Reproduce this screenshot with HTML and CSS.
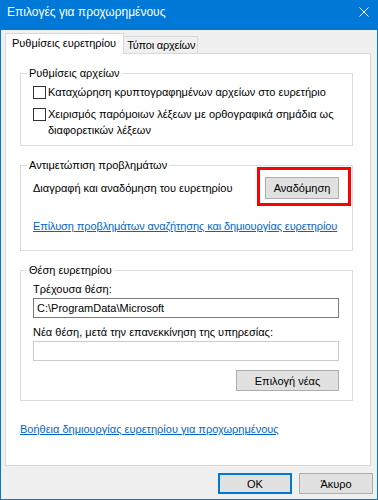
FILE: index.html
```html
<!DOCTYPE html>
<html lang="el">
<head>
  <meta charset="UTF-8" />
  <title>Επιλογές για προχωρημένους</title>
  <link rel="stylesheet" href="styles.css">
</head>
<body>
  <div class="window">
    <header class="titlebar">
      <span class="title">Επιλογές για προχωρημένους</span>
      <svg class="close-icon" width="10" height="10" viewBox="0 0 10 10">
        <path d="M0.5 0.5 L9.5 9.5 M9.5 0.5 L0.5 9.5" stroke="#fff" stroke-width="1" fill="none"/>
      </svg>
    </header>

    <nav class="tabs">
      <div class="tab active">Ρυθμίσεις ευρετηρίου</div>
      <div class="tab">Τύποι αρχείων</div>
    </nav>

    <main class="panel">
      <fieldset class="group group-files">
        <legend>Ρυθμίσεις αρχείων</legend>
        <label class="check-row">
          <span class="checkbox"></span>
          <span>Καταχώρηση κρυπτογραφημένων αρχείων στο ευρετήριο</span>
        </label>
        <label class="check-row second">
          <span class="checkbox"></span>
          <span>Χειρισμός παρόμοιων λέξεων με ορθογραφικά σημάδια ως διαφορετικών λέξεων</span>
        </label>
      </fieldset>

      <fieldset class="group group-trouble">
        <legend>Αντιμετώπιση προβλημάτων</legend>
        <div class="rebuild-row">
          <span>Διαγραφή και αναδόμηση του ευρετηρίου</span>
          <button class="btn btn-rebuild">Αναδόμηση</button>
        </div>
        <a href="#" class="link trouble-link">Επίλυση προβλημάτων αναζήτησης και δημιουργίας ευρετηρίου</a>
      </fieldset>

      <fieldset class="group group-location">
        <legend>Θέση ευρετηρίου</legend>
        <div class="field-label">Τρέχουσα θέση:</div>
        <input class="text-input" type="text" value="C:\ProgramData\Microsoft" readonly>
        <div class="field-label second">Νέα θέση, μετά την επανεκκίνηση της υπηρεσίας:</div>
        <input class="text-input disabled" type="text" disabled>
        <div class="select-row">
          <button class="btn btn-select">Επιλογή νέας</button>
        </div>
      </fieldset>

      <a href="#" class="link help-link">Βοήθεια δημιουργίας ευρετηρίου για προχωρημένους</a>
    </main>

    <footer class="dialog-buttons">
      <button class="btn btn-dialog default">OK</button>
      <button class="btn btn-dialog">Άκυρο</button>
    </footer>
  </div>
</body>
</html>
```

FILE: styles.css
```css
body {
  margin: 0;
  font-family: "Liberation Sans", "DejaVu Sans", sans-serif;
  font-size: 11px;
  line-height: 16px;
  color: #000;
}

.window {
  width: 378px;
  height: 500px;
  box-sizing: border-box;
  border: 1px solid #0078d7;
  border-top: none;
  background: #f0f0f0;
  display: flex;
  flex-direction: column;
}

.titlebar {
  height: 30px;
  box-sizing: border-box;
  background: #0078d7;
  color: #fff;
  font-size: 12px;
  display: flex;
  align-items: center;
  justify-content: space-between;
  padding: 0 8px 6px 6px;
  flex-shrink: 0;
}

.close-icon {
  display: block;
}

.tabs {
  display: flex;
  align-items: flex-end;
  margin: 3px 0 0 4px;
  flex-shrink: 0;
}

.tab {
  height: 16px;
  line-height: 17px;
  padding: 0 2px 0 3px;
  letter-spacing: -0.2px;
  border: 1px solid #d9d9d9;
  border-left: none;
  border-bottom: none;
  background: #f0f0f0;
  white-space: nowrap;
}

.tab.active {
  height: 20px;
  line-height: 19px;
  padding: 0 7px 0 6px;
  letter-spacing: 0;
  border-left: 1px solid #d9d9d9;
  background: #fff;
  margin-bottom: -1px;
  position: relative;
  z-index: 1;
}

.panel {
  flex: 1;
  min-height: 0;
  margin: 0 6px 0 4px;
  border: 1px solid #d9d9d9;
  background: #fff;
  padding: 11px 17px 0 14px;
}

.group {
  margin: 0;
  min-width: 0;
  border: 1px solid #dcdcdc;
  padding: 0 13px 0 12px;
}

.group legend {
  padding: 0 2px;
  margin-left: -6px;
  line-height: 16px;
}

.group-files {
  padding-top: 3px;
  padding-bottom: 7px;
}

.group-trouble,
.group-location {
  margin-top: 11px;
}

.check-row {
  display: flex;
  align-items: flex-start;
  gap: 2px;
}

.check-row.second {
  margin-top: 6px;
}

.checkbox {
  flex-shrink: 0;
  width: 13px;
  height: 13px;
  box-sizing: border-box;
  border: 1px solid #333;
  background: #fff;
  margin-top: 2px;
}

.btn {
  font: inherit;
  color: #000;
  background: #e1e1e1;
  border: 1px solid #adadad;
  padding: 0;
  box-sizing: border-box;
}

.rebuild-row {
  display: flex;
  justify-content: space-between;
  align-items: center;
  padding-top: 4px;
}

.btn-rebuild {
  width: 74px;
  height: 22px;
  position: relative;
}

/* red highlight frame around the button */
.btn-rebuild::after {
  content: "";
  position: absolute;
  top: -11px;
  left: -9px;
  right: -13px;
  bottom: -8px;
  border: 3px solid #f00;
}

.link {
  color: #0066cc;
  text-decoration: underline;
  display: block;
  white-space: nowrap;
}

.trouble-link {
  margin-top: 19px;
  padding-bottom: 16px;
  letter-spacing: -0.1px;
}

.group-location {
  padding-top: 3px;
  padding-bottom: 9px;
}

.field-label.second {
  margin-top: 6px;
}

.text-input {
  display: block;
  width: 100%;
  height: 20px;
  box-sizing: border-box;
  margin: 1px 0 0;
  padding: 0 3px;
  font: inherit;
  color: #000;
  border: 1px solid #7a7a7a;
  background: #fff;
  outline: none;
}

.text-input.disabled {
  border-color: #cccccc;
}

.select-row {
  display: flex;
  justify-content: flex-end;
  margin-top: 9px;
}

.btn-select {
  width: 103px;
  height: 21px;
}

.help-link {
  margin-top: 20px;
}

.dialog-buttons {
  display: flex;
  justify-content: flex-end;
  gap: 7px;
  padding: 7px 4px 5px;
  flex-shrink: 0;
}

.btn-dialog {
  width: 74px;
  height: 21px;
}

.btn-dialog.default {
  border: 2px solid #0078d7;
}
```
